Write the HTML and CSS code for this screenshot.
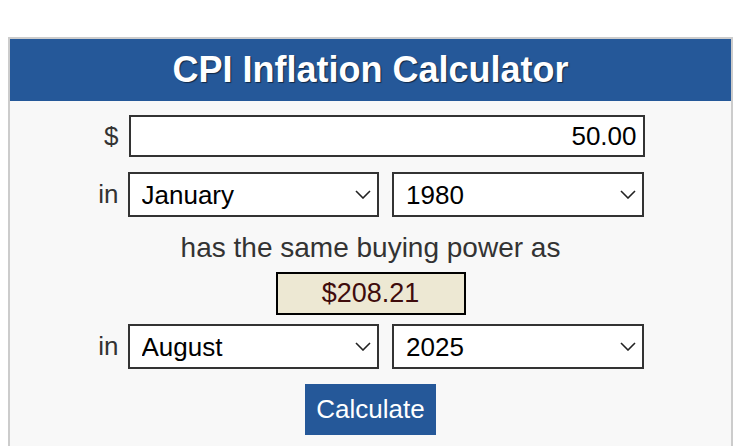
FILE: index.html
```html
<!DOCTYPE html>
<html lang="en">
<head>
<meta charset="utf-8">
<title>CPI Inflation Calculator</title>
<link rel="stylesheet" href="styles.css">
</head>
<body>
<div class="calc">
  <h1 class="calc-title">CPI Inflation Calculator</h1>
  <div class="calc-body">
    <div class="row row-amount">
      <label class="row-label" for="amount">$</label>
      <input class="amount" id="amount" type="text" value="50.00">
    </div>
    <div class="row row-date">
      <span class="row-label">in</span>
      <div class="pair">
        <span class="sel">
          <select class="select"><option>January</option></select>
          <svg class="chev" viewBox="0 0 16 9" width="16" height="9"><path d="M1 1 L8 8 L15 1" fill="none" stroke="#222" stroke-width="1.6"/></svg>
        </span>
        <span class="sel">
          <select class="select"><option>1980</option></select>
          <svg class="chev" viewBox="0 0 16 9" width="16" height="9"><path d="M1 1 L8 8 L15 1" fill="none" stroke="#222" stroke-width="1.6"/></svg>
        </span>
      </div>
    </div>
    <p class="same">has the same buying power as</p>
    <div class="result">$208.21</div>
    <div class="row row-date2">
      <span class="row-label">in</span>
      <div class="pair">
        <span class="sel">
          <select class="select"><option>August</option></select>
          <svg class="chev" viewBox="0 0 16 9" width="16" height="9"><path d="M1 1 L8 8 L15 1" fill="none" stroke="#222" stroke-width="1.6"/></svg>
        </span>
        <span class="sel">
          <select class="select"><option>2025</option></select>
          <svg class="chev" viewBox="0 0 16 9" width="16" height="9"><path d="M1 1 L8 8 L15 1" fill="none" stroke="#222" stroke-width="1.6"/></svg>
        </span>
      </div>
    </div>
    <button class="btn" type="button">Calculate</button>
  </div>
</div>
</body>
</html>
```

FILE: styles.css
```css
* { box-sizing: border-box; }
html, body { margin: 0; padding: 0; background: #fff; }
body {
  font-family: "Liberation Sans", Arial, Helvetica, sans-serif;
  padding: 37px 11px 0 8px;
}
.calc {
  width: 725px;
  border: 2px solid #cccccc;
  border-bottom: none;
  background: #f8f8f8;
}
.calc-title {
  margin: 0;
  height: 62px;
  line-height: 62px;
  background: #255899;
  color: #fff;
  font-size: 36px;
  font-weight: bold;
  text-align: center;
  text-shadow: 1px 1px 1px rgba(0,0,0,0.55);
}
.calc-body {
  display: flex;
  flex-direction: column;
  align-items: center;
  padding: 14px 0 30px;
}
.row {
  display: grid;
  grid-template-columns: 30px 516px;
  align-items: center;
}
.row-label {
  font-size: 26px;
  color: #333;
  text-align: right;
  padding-right: 9px;
}
.amount {
  height: 42px;
  width: 516px;
  border: 2px solid #333;
  background: #fff;
  font-family: inherit;
  font-size: 26px;
  color: #000;
  text-align: right;
  padding: 0 6px;
  margin: 0 0 0 1px;
  outline: none;
}
.row-date { margin-top: 15px; }
.row-date2 { margin-top: 9px; }
.pair {
  display: grid;
  grid-template-columns: 1fr 1fr;
  gap: 13px;
}
.sel {
  position: relative;
  display: block;
}
.select {
  -webkit-appearance: none;
  appearance: none;
  display: block;
  width: 100%;
  height: 45px;
  border: 2px solid #333;
  border-radius: 0;
  background: #fff;
  font-family: inherit;
  font-size: 26px;
  color: #000;
  padding: 0 30px 0 12px;
  margin: 0;
}
.chev {
  position: absolute;
  right: 8px;
  top: 18px;
  pointer-events: none;
}
.same {
  margin: 13px 0 7px;
  font-size: 28px;
  line-height: 35px;
  color: #333;
}
.result {
  width: 190px;
  height: 43px;
  line-height: 39px;
  border: 2px solid #000;
  background: #ede8d3;
  color: #3f0c0c;
  font-size: 27px;
  text-align: center;
}
.btn {
  margin-top: 15px;
  height: 51px;
  padding: 0 11px;
  border: none;
  border-radius: 0;
  background: #255899;
  color: #fff;
  font-family: inherit;
  font-size: 26px;
}
```
